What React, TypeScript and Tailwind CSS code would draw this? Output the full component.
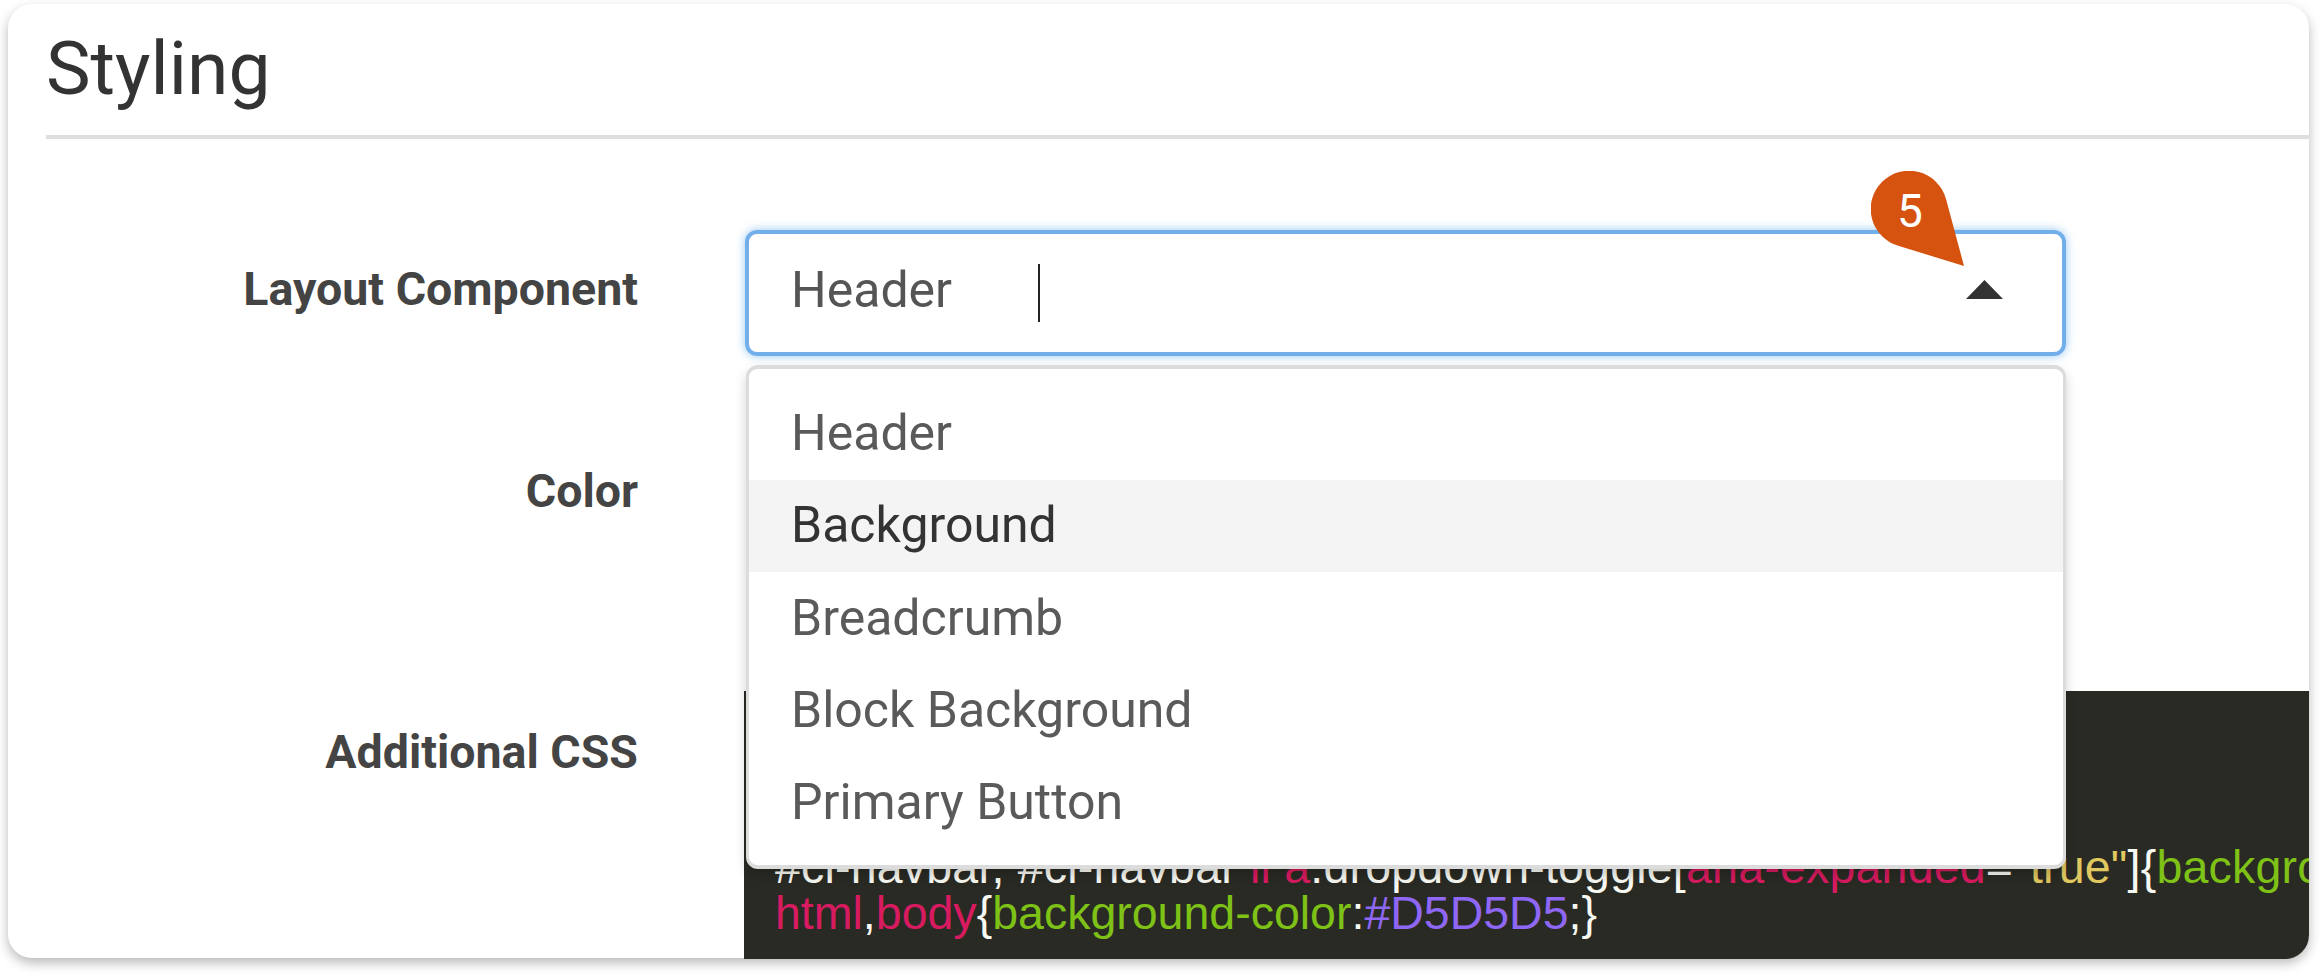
const items = ["Header", "Background", "Breadcrumb", "Block Background", "Primary Button"];

export default function App() {
  return (
    <div className="w-[2324px] h-[978px] bg-white pl-2 pt-1 font-['Roboto',sans-serif]">
      <div className="relative w-[2301px] h-[954px] rounded-[24px] bg-white shadow-[0_5px_12px_rgba(0,0,0,0.28)]">
        <div className="h-[955px] overflow-hidden rounded-[24px] flex flex-col">
          <div className="ml-[38px] h-[135px] shrink-0 border-b-[4px] border-[#dedede] pt-[24px]">
            <h1 className="text-[75px] leading-[80px] text-[#333] font-normal">Styling</h1>
          </div>
          <div className="flex flex-1 min-h-0">
            <div className="w-[630px] shrink-0 flex flex-col items-end font-bold text-[#444] text-[46.5px] leading-[48px] pt-[126px]">
              <div className="h-[48px]">Layout Component</div>
              <div className="h-[48px] mt-[154px]">Color</div>
              <div className="h-[48px] mt-[213px]">Additional CSS</div>
            </div>
            <div className="flex-1 min-w-0 pl-[107px] pt-[91px] flex flex-col">
              <div className="w-[1321px] h-[126px] shrink-0 rounded-[12px] border-[4px] border-[#72aeea] shadow-[0_0_10px_rgba(102,175,233,0.7)] flex items-center pl-[42px] pr-[59px]">
                <span className="text-[50px] leading-[60px] text-[#555] mb-[6px]">Header</span>
                <span className="ml-[86px] w-[2px] h-[58px] bg-[#222]" />
                <svg className="ml-auto mb-[7px]" width="37" height="19" viewBox="0 0 37 19"><path d="M18.5 0L37 19H0Z" fill="#333" /></svg>
              </div>
              <div className="mt-[335px] flex-1 bg-[#2a2a24] -ml-[1px] pl-[31px] pt-[153px] overflow-hidden font-['Liberation_Sans',sans-serif] text-[46.5px] leading-[46px] whitespace-nowrap text-[#f8f8f2]">
                <div className="tracking-[0.2px]">
                  <span>#cl-navbar, #cl-navbar </span><span className="text-[#d81b60]">li a</span><span>.dropdown-toggle[</span><span className="text-[#d81b60]">aria-expanded</span><span>=</span><span className="text-[#e0c860]">"true"</span><span>]{"{"}</span><span className="text-[#7ec217]">background-color</span>
                </div>
                <div>
                  <span className="text-[#d81b60]">html</span>,<span className="text-[#d81b60]">body</span>{"{"}<span className="text-[#7ec217]">background-color</span>:<span className="text-[#8f67f5]">#D5D5D5</span>;{"}"}
                </div>
              </div>
            </div>
          </div>
        </div>
        <div className="absolute left-[738px] top-[361px] w-[1320px] h-[504px] rounded-[12px] border-[3px] border-t-[4px] border-b-[4px] border-[#dcdcdc] bg-white shadow-[0_6px_12px_rgba(0,0,0,0.18)] pt-[18.5px] text-[50px] text-[#5a5a5a]">
          {items.map((t) => (
            <div key={t} className={t === "Background" ? "h-[92.3px] flex items-center pl-[42px] bg-[#f4f4f4] text-[#333]" : "h-[92.3px] flex items-center pl-[42px]"}>{t}</div>
          ))}
        </div>
        <svg className="absolute left-[1863px] top-[167px]" width="93" height="95" viewBox="0 0 93 95">
          <path d="M93 95L28 75A38.3 38.3 0 1 1 75 28Z" fill="#d5520f" />
          <text x="39" y="56" textAnchor="middle" fontSize="46" fontWeight="400" fill="#fff" fontFamily="Roboto, sans-serif">5</text>
        </svg>
      </div>
    </div>
  );
}
